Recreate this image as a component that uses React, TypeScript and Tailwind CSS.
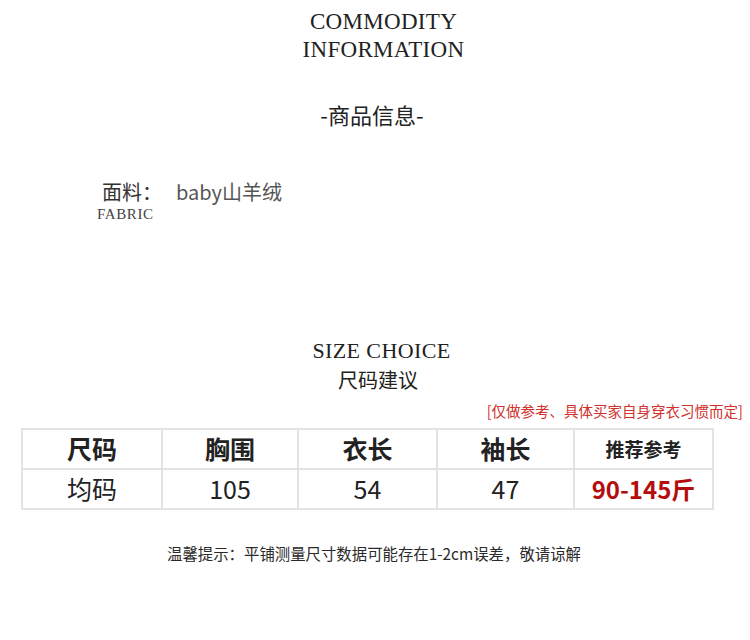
const serif = "font-['Liberation_Serif','Times_New_Roman',serif]";
const cjk = "font-['Noto_Sans_CJK_SC','Noto_Sans',sans-serif]";

const headers = ["尺码", "胸围", "衣长", "袖长", "推荐参考"];
const values = ["均码", "105", "54", "47", "90-145斤"];

export default function App() {
  return (
    <div className={`w-[750px] h-[640px] bg-white overflow-hidden text-[#222] ${cjk}`}>
      {/* title */}
      <div className={`pt-[8px] pl-[17px] text-center text-[23px] leading-[28px] tracking-[0.3px] ${serif}`}>
        <div>COMMODITY</div>
        <div>INFORMATION</div>
      </div>
      <div className="mt-[39px] pr-[6px] text-center text-[22px] leading-[22px]">-商品信息-</div>

      {/* fabric */}
      <div className="mt-[57px] pl-[102px] flex items-baseline text-[20px] leading-[20px]">
        <span className="text-[#333]">面料：</span>
        <span className="ml-[14px] text-[#555]">baby山羊绒</span>
      </div>
      <div className={`mt-[5px] pl-[97px] text-[15px] leading-[15px] tracking-[0.6px] text-[#444] ${serif}`}>
        FABRIC
      </div>

      {/* size choice */}
      <div className={`mt-[118px] pl-[13px] text-center text-[22px] leading-[22px] tracking-[0.4px] ${serif}`}>
        SIZE CHOICE
      </div>
      <div className="mt-[8px] pl-[6px] text-center text-[20px] leading-[20px]">尺码建议</div>
      <div className="mt-[13px] pr-[7px] text-right text-[14.5px] leading-[15px] text-[#d0312d]">
        [仅做参考、具体买家自身穿衣习惯而定]
      </div>

      {/* table */}
      <div className="mt-[10px] ml-[21px] w-[693px] border-l-2 border-t-2 border-[#e3e3e3] grid grid-cols-[140px_136px_139px_137px_139px]">
        {headers.map((h, i) => (
          <div
            key={h}
            className={`h-[40px] border-r-2 border-b-2 border-[#e3e3e3] flex items-center justify-center font-bold ${
              i === 4 ? "text-[19px]" : "text-[25px]"
            }`}
          >
            {h}
          </div>
        ))}
        {values.map((v, i) => (
          <div
            key={v}
            className={`h-[40px] border-r-2 border-b-2 border-[#e3e3e3] flex items-center justify-center ${
              i === 4 ? "text-[24px] font-bold text-[#b50d0d]" : "text-[25px]"
            }`}
          >
            {v}
          </div>
        ))}
      </div>

      {/* note */}
      <div className="mt-[36px] pr-[2px] text-center text-[15.4px] leading-[15px] text-[#2a2a2a]">
        温馨提示：平铺测量尺寸数据可能存在1-2cm误差，敬请谅解
      </div>
    </div>
  );
}
